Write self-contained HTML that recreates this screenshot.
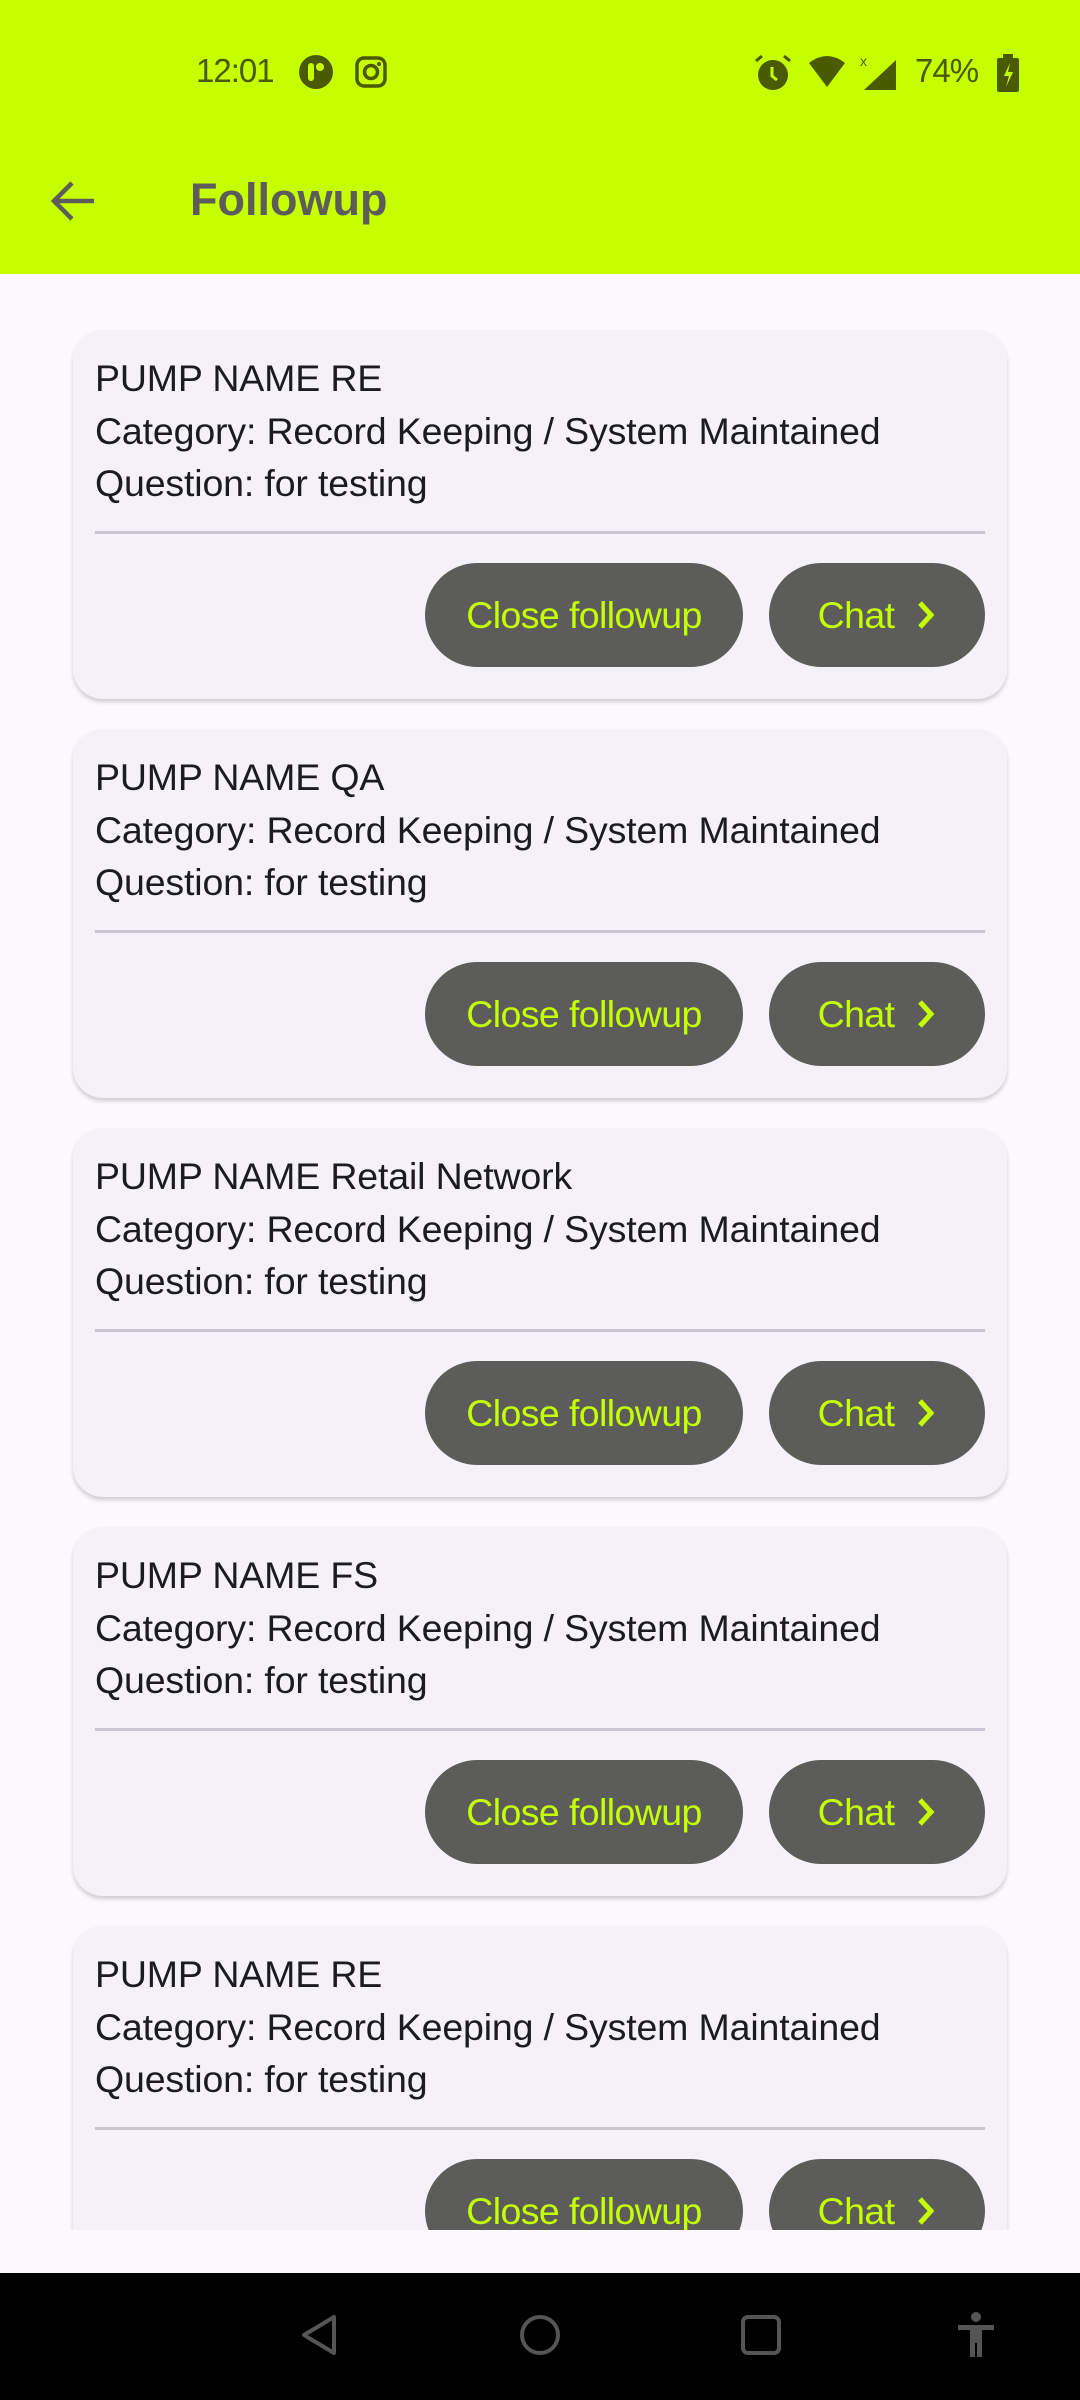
<!DOCTYPE html>
<html><head><meta charset="utf-8"><style>
*{margin:0;padding:0;box-sizing:border-box}
body{width:1080px;height:2400px;background:#fdf8fd;font-family:"Liberation Sans",sans-serif;position:relative;overflow:hidden}
.top{position:absolute;left:0;top:0;width:1080px;height:274px;background:#c6ff00}
.st{position:absolute;top:52px;font-size:33px;color:#4a5a00;letter-spacing:-1px}
.title{position:absolute;left:190px;top:174px;font-size:45px;font-weight:bold;color:#5c5c5a}
.list{position:absolute;left:0;top:274px;width:1080px;height:1956px;overflow:hidden}
.card{position:absolute;left:73px;width:934px;height:369px;background:#f4f2f8;border-radius:30px;box-shadow:0 3px 4px rgba(0,0,0,0.18)}
.t{position:absolute;left:22px;font-size:37.5px;color:#1c1b1f;letter-spacing:-0.15px;white-space:nowrap}
.div{position:absolute;left:22px;right:22px;top:201px;height:3px;background:#cac4d0}
.btn{position:absolute;top:233px;height:104px;border-radius:52px;background:#5c5c5a;color:#c6ff00;font-size:37.5px;letter-spacing:-0.6px;display:flex;align-items:center;justify-content:center}
.btn svg{margin-left:22px}
.nav{position:absolute;left:0;top:2273px;width:1080px;height:127px;background:#000}
</style></head><body>
<div class="top">
<div class="st" style="left:196px">12:01</div>
<svg style="position:absolute;left:298px;top:54px" width="36" height="36" viewBox="0 0 36 36"><circle cx="18" cy="18" r="17" fill="#4a5a00"/><rect x="10" y="9" width="6" height="18" rx="3" fill="#c6ff00"/><circle cx="22" cy="13" r="4" fill="#c6ff00"/></svg>
<svg style="position:absolute;left:355px;top:56px" width="32" height="32" viewBox="0 0 32 32"><rect x="2" y="2" width="28" height="28" rx="7" fill="none" stroke="#4a5a00" stroke-width="3.5"/><circle cx="16" cy="16" r="6.5" fill="none" stroke="#4a5a00" stroke-width="3.5"/><circle cx="24" cy="8" r="2" fill="#4a5a00"/></svg>
<svg style="position:absolute;left:753px;top:53px" width="40" height="40" viewBox="0 0 40 40"><circle cx="20" cy="22" r="15" fill="#4a5a00"/><path d="M19 14v9l5 4" stroke="#c6ff00" stroke-width="3" fill="none"/><path d="M3 8l6-5M37 8l-6-5" stroke="#4a5a00" stroke-width="3"/></svg>
<svg style="position:absolute;left:805px;top:55px" width="44" height="34" viewBox="0 0 44 34"><path d="M4 8Q22-6 40 8L22 32Z" fill="#4a5a00"/></svg>
<svg style="position:absolute;left:856px;top:52px" width="42" height="40" viewBox="0 0 42 40"><path d="M40 8V38H8Z" fill="#4a5a00"/><text x="4" y="14" font-size="14" fill="#4a5a00" font-family="Liberation Sans">x</text></svg>
<div class="st" style="left:915px">74%</div>
<svg style="position:absolute;left:996px;top:54px" width="24" height="38" viewBox="0 0 24 38"><rect x="7" y="0" width="10" height="4" fill="#4a5a00"/><rect x="1" y="4" width="22" height="34" rx="2" fill="#4a5a00"/><path d="M14 9l-6 13h5l-3 11 7-15h-5z" fill="#c6ff00"/></svg>
<svg style="position:absolute;left:50px;top:180px" width="46" height="42" viewBox="0 0 46 42"><path d="M22 3L4 21l18 18M4 21h40" stroke="#5c5c5a" stroke-width="4.5" fill="none"/></svg>
<div class="title">Followup</div>
</div>
<div class="list">
<div class="card" style="top:56px"><div class="t" style="top:27px">PUMP NAME RE</div><div class="t" style="top:80px">Category: Record Keeping / System Maintained</div><div class="t" style="top:132px">Question: for testing</div><div class="div"></div><div class="btn" style="left:352px;width:318px">Close followup</div><div class="btn" style="left:696px;width:216px">Chat<svg width="20" height="30" viewBox="0 0 20 30"><path d="M4 3l11 12L4 27" stroke="#c6ff00" stroke-width="5" fill="none"/></svg></div></div>
<div class="card" style="top:455px"><div class="t" style="top:27px">PUMP NAME QA</div><div class="t" style="top:80px">Category: Record Keeping / System Maintained</div><div class="t" style="top:132px">Question: for testing</div><div class="div"></div><div class="btn" style="left:352px;width:318px">Close followup</div><div class="btn" style="left:696px;width:216px">Chat<svg width="20" height="30" viewBox="0 0 20 30"><path d="M4 3l11 12L4 27" stroke="#c6ff00" stroke-width="5" fill="none"/></svg></div></div>
<div class="card" style="top:854px"><div class="t" style="top:27px">PUMP NAME Retail Network</div><div class="t" style="top:80px">Category: Record Keeping / System Maintained</div><div class="t" style="top:132px">Question: for testing</div><div class="div"></div><div class="btn" style="left:352px;width:318px">Close followup</div><div class="btn" style="left:696px;width:216px">Chat<svg width="20" height="30" viewBox="0 0 20 30"><path d="M4 3l11 12L4 27" stroke="#c6ff00" stroke-width="5" fill="none"/></svg></div></div>
<div class="card" style="top:1253px"><div class="t" style="top:27px">PUMP NAME FS</div><div class="t" style="top:80px">Category: Record Keeping / System Maintained</div><div class="t" style="top:132px">Question: for testing</div><div class="div"></div><div class="btn" style="left:352px;width:318px">Close followup</div><div class="btn" style="left:696px;width:216px">Chat<svg width="20" height="30" viewBox="0 0 20 30"><path d="M4 3l11 12L4 27" stroke="#c6ff00" stroke-width="5" fill="none"/></svg></div></div>
<div class="card" style="top:1652px"><div class="t" style="top:27px">PUMP NAME RE</div><div class="t" style="top:80px">Category: Record Keeping / System Maintained</div><div class="t" style="top:132px">Question: for testing</div><div class="div"></div><div class="btn" style="left:352px;width:318px">Close followup</div><div class="btn" style="left:696px;width:216px">Chat<svg width="20" height="30" viewBox="0 0 20 30"><path d="M4 3l11 12L4 27" stroke="#c6ff00" stroke-width="5" fill="none"/></svg></div></div>
</div>
<div class="nav">
<svg style="position:absolute;left:298px;top:40px" width="44" height="44" viewBox="0 0 44 44"><path d="M36 4L6 22l30 18z" fill="none" stroke="#555" stroke-width="4" stroke-linejoin="round"/></svg>
<svg style="position:absolute;left:518px;top:40px" width="44" height="44" viewBox="0 0 44 44"><circle cx="22" cy="22" r="18" fill="none" stroke="#555" stroke-width="4"/></svg>
<svg style="position:absolute;left:740px;top:41px" width="42" height="42" viewBox="0 0 42 42"><rect x="3" y="3" width="36" height="36" rx="5" fill="none" stroke="#555" stroke-width="4"/></svg>
<svg style="position:absolute;left:956px;top:38px" width="40" height="48" viewBox="0 0 40 48"><circle cx="20" cy="6" r="5" fill="#555"/><path d="M2 14h36v5H26v27h-5V32h-2v14h-5V19H2z" fill="#555"/></svg>
</div>
</body></html>
